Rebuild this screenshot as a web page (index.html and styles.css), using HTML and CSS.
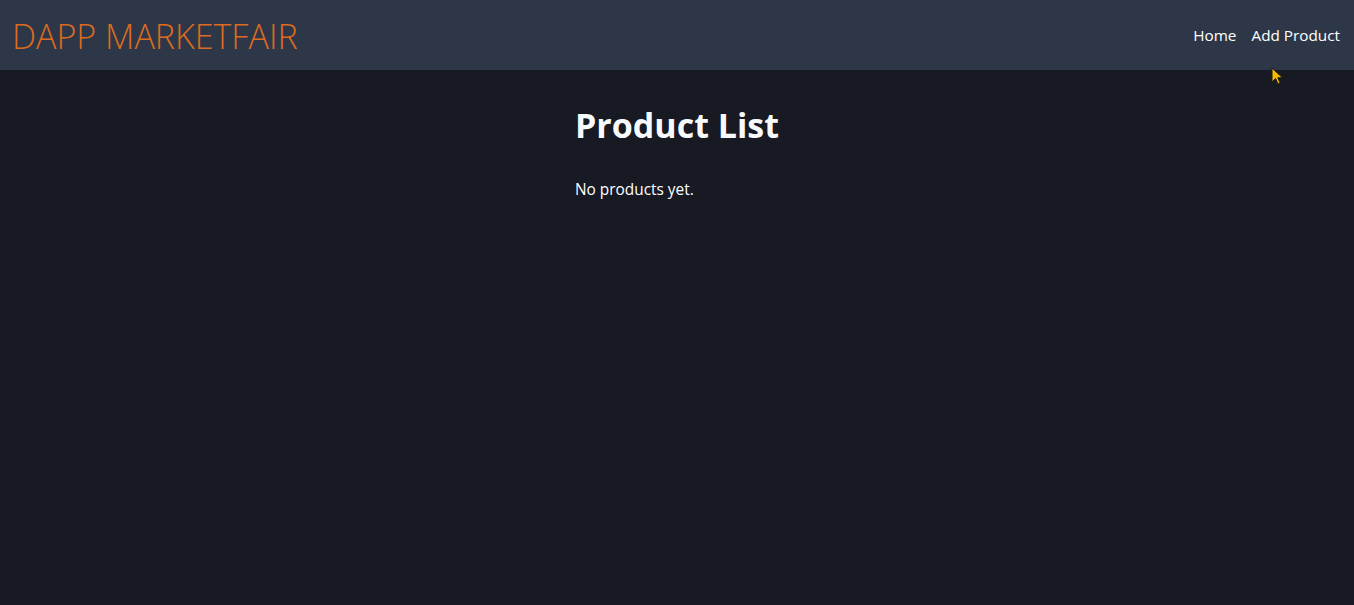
FILE: index.html
```html
<!DOCTYPE html>
<html>
<head>
<meta charset="utf-8">
<link rel="stylesheet" href="styles.css">
</head>
<body>
<header class="topbar">
  <div class="logo">DAPP MARKETFAIR</div>
  <nav class="nav">
    <a class="nav-link" href="#">Home</a>
    <a class="nav-link" href="#">Add Product</a>
  </nav>
</header>
<main class="main">
  <section class="list">
    <h1 class="title">Product List</h1>
    <p class="empty">No products yet.</p>
  </section>
</main>
<svg class="cursor" width="14" height="20" viewBox="0 0 14 20">
  <path d="M1 1 L1 15 L4.5 11.5 L7 17 L9.2 16 L6.8 10.8 L11.5 10.8 Z" fill="#f5b800" stroke="#1a1a1a" stroke-width="1"/>
</svg>
</body>
</html>
```
FILE: styles.css
```css
html, body {
  margin: 0;
  padding: 0;
}
body {
  background: #171923;
  color: #ffffff;
  font-family: "Open Sans", "Noto Sans", sans-serif;
  min-height: 605px;
}
.topbar {
  height: 70px;
  background: #2d3748;
  display: flex;
  align-items: center;
  justify-content: space-between;
  padding: 0 14px 0 12px;
  box-sizing: border-box;
}
.logo {
  color: #dd6b20;
  font-size: 34px;
  font-weight: 300;
  line-height: 1;
  margin-top: 2px;
}
.nav {
  display: flex;
  gap: 15px;
}
.nav-link {
  color: #ffffff;
  text-decoration: none;
  font-size: 15.3px;
}
.main {
  display: flex;
  justify-content: center;
  padding-top: 30px;
}
.title {
  margin: 0;
  font-size: 34px;
  font-weight: 700;
  line-height: 50px;
  color: #f7fafc;
}
.empty {
  margin: 28px 0 0;
  font-size: 15.4px;
  line-height: 24px;
}
.cursor {
  position: absolute;
  left: 1271px;
  top: 67px;
}
```
